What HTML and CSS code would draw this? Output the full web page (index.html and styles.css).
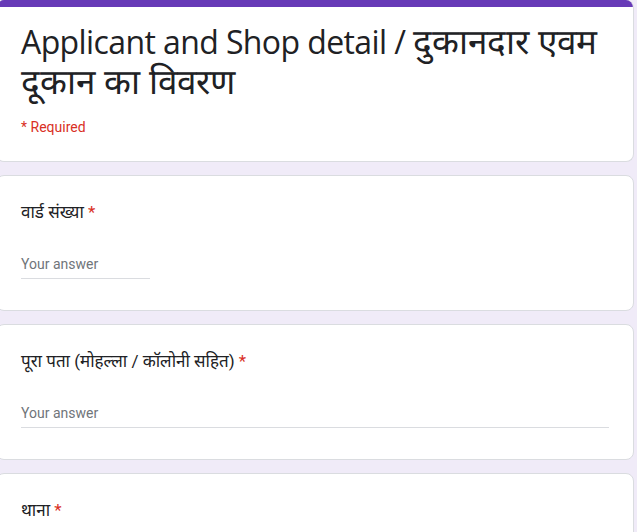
FILE: index.html
```html
<!DOCTYPE html>
<html lang="hi">
<head>
<meta charset="utf-8">
<title>Applicant and Shop detail</title>
<link rel="stylesheet" href="styles.css">
</head>
<body>
<div class="form">
  <div class="card header">
    <div class="accent"></div>
    <div class="header-body">
      <h1 class="title">Applicant and Shop detail / <span class="deva">दुकानदार एवम दूकान का विवरण</span></h1>
      <div class="required-note">* Required</div>
    </div>
  </div>

  <div class="card question">
    <div class="q-label">वार्ड संख्या <span class="star">*</span></div>
    <div class="answer short"><span class="placeholder">Your answer</span></div>
  </div>

  <div class="card question">
    <div class="q-label">पूरा पता (मोहल्ला / कॉलोनी सहित) <span class="star">*</span></div>
    <div class="answer long"><span class="placeholder">Your answer</span></div>
  </div>

  <div class="card question">
    <div class="q-label">थाना <span class="star">*</span></div>
    <div class="answer short"><span class="placeholder">Your answer</span></div>
  </div>
</div>
</body>
</html>
```

FILE: styles.css
```css
html, body {
  margin: 0;
  padding: 0;
  background: #f0ebf8;
  height: 100%;
  overflow: hidden;
}

body {
  font-family: Roboto, "Noto Sans", Arial, sans-serif;
  color: #202124;
}

.form {
  display: flex;
  flex-direction: column;
  gap: 13px;
  width: 638px;
  margin-left: -4px;
}

.card {
  background: #fff;
  border: 1px solid #dadce0;
  border-radius: 8px;
  box-sizing: border-box;
}

.header {
  overflow: hidden;
  border-top: none;
}

.accent {
  height: 7px;
  background: #673ab7;
}

.header-body {
  padding: 15px 24px 24px 24px;
}

.title {
  margin: 0;
  font-family: "Open Sans", Roboto, sans-serif;
  font-weight: 400;
  font-size: 32px;
  line-height: 40px;
  letter-spacing: -0.6px;
  color: #202124;
}

.deva {
  font-size: 35px;
  line-height: 1;
  letter-spacing: 0;
}

.required-note {
  margin-top: 15px;
  font-size: 14px;
  line-height: 20px;
  color: #d93025;
}

.question {
  padding: 24px 24px 31px 24px;
}

.q-label {
  font-size: 17px;
  line-height: 24px;
  height: 24px;
  color: #202124;
}

.star {
  color: #d93025;
}

.answer {
  margin-top: 24px;
  padding: 4px 0 2px 0;
  border-bottom: 1px solid #dadce0;
  box-sizing: border-box;
}

.answer.short {
  width: 129px;
}

.answer.long {
  width: 100%;
}

.placeholder {
  font-size: 14px;
  line-height: 24px;
  color: #70757a;
}
```
